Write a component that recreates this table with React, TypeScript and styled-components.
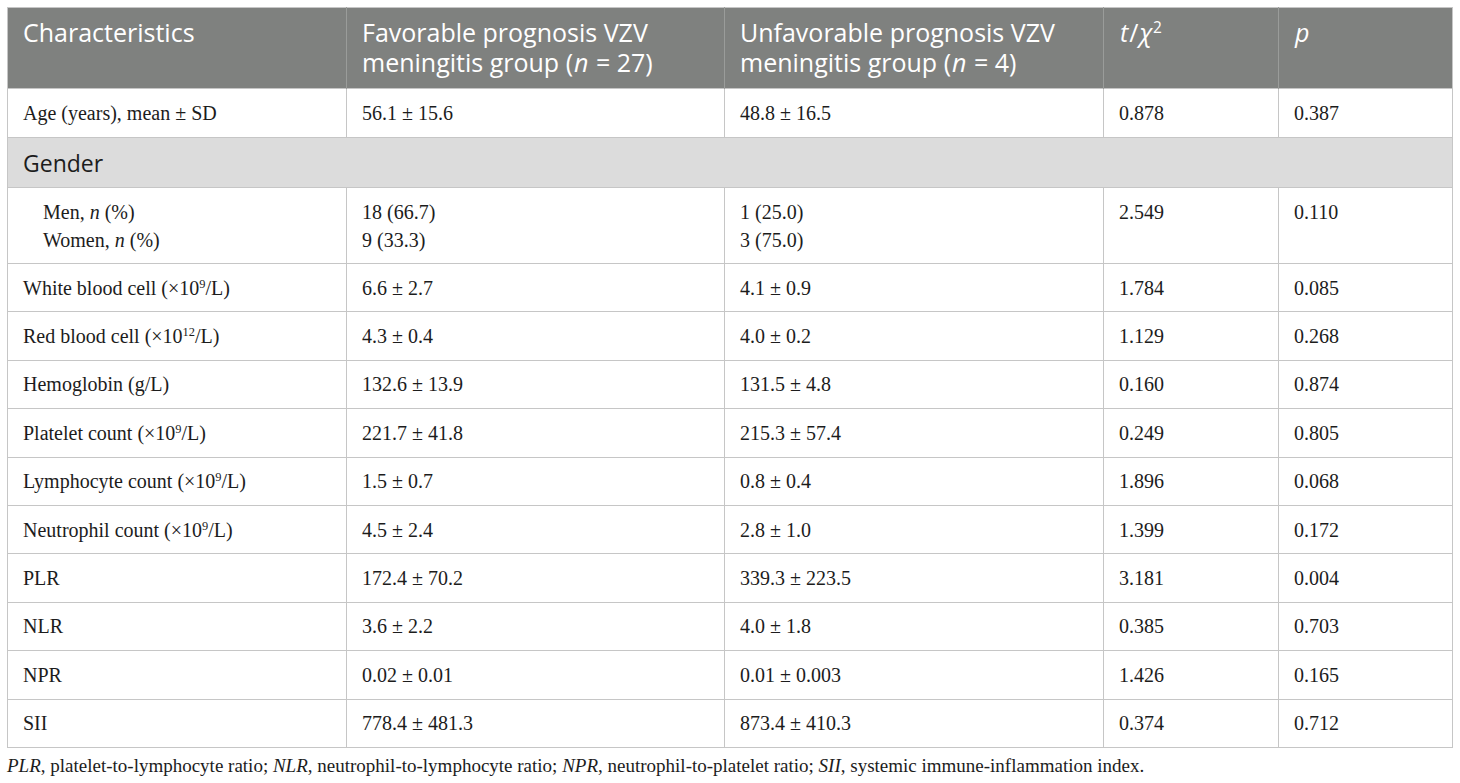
import React from 'react'
import styled, { createGlobalStyle } from 'styled-components'

const GlobalStyle = createGlobalStyle`
  html, body {
    margin: 0;
    padding: 0;
    background: #ffffff;
  }
`;

type Row = {
  label: React.ReactNode,
  fav: React.ReactNode,
  unfav: React.ReactNode,
  stat: string,
  p: string,
}

const colWidths = [339, 378, 379, 175, 174];

const rows: Row[] = [
  { label: <>White blood cell (×10<sup>9</sup>/L)</>, fav: '6.6 ± 2.7', unfav: '4.1 ± 0.9', stat: '1.784', p: '0.085' },
  { label: <>Red blood cell (×10<sup>12</sup>/L)</>, fav: '4.3 ± 0.4', unfav: '4.0 ± 0.2', stat: '1.129', p: '0.268' },
  { label: 'Hemoglobin (g/L)', fav: '132.6 ± 13.9', unfav: '131.5 ± 4.8', stat: '0.160', p: '0.874' },
  { label: <>Platelet count (×10<sup>9</sup>/L)</>, fav: '221.7 ± 41.8', unfav: '215.3 ± 57.4', stat: '0.249', p: '0.805' },
  { label: <>Lymphocyte count (×10<sup>9</sup>/L)</>, fav: '1.5 ± 0.7', unfav: '0.8 ± 0.4', stat: '1.896', p: '0.068' },
  { label: <>Neutrophil count (×10<sup>9</sup>/L)</>, fav: '4.5 ± 2.4', unfav: '2.8 ± 1.0', stat: '1.399', p: '0.172' },
  { label: 'PLR', fav: '172.4 ± 70.2', unfav: '339.3 ± 223.5', stat: '3.181', p: '0.004' },
  { label: 'NLR', fav: '3.6 ± 2.2', unfav: '4.0 ± 1.8', stat: '0.385', p: '0.703' },
  { label: 'NPR', fav: '0.02 ± 0.01', unfav: '0.01 ± 0.003', stat: '1.426', p: '0.165' },
  { label: 'SII', fav: '778.4 ± 481.3', unfav: '873.4 ± 410.3', stat: '0.374', p: '0.712' },
]

export default function App() {
  return (
    <Page>
      <GlobalStyle />
      <Table>
        <colgroup>
          {colWidths.map((w, i) => <Col key={i} $width={w} />)}
        </colgroup>
        <thead>
          <tr>
            <HeadCell>Characteristics</HeadCell>
            <HeadCell>Favorable prognosis VZV meningitis group (<i>n</i> = 27)</HeadCell>
            <HeadCell>Unfavorable prognosis VZV meningitis group (<i>n</i> = 4)</HeadCell>
            <HeadCell><i>t</i>/<i>χ</i><sup>2</sup></HeadCell>
            <HeadCell><i>p</i></HeadCell>
          </tr>
        </thead>
        <tbody>
          <BodyRow $height={49}>
            <Cell>Age (years), mean ± SD</Cell>
            <Cell>56.1 ± 15.6</Cell>
            <Cell>48.8 ± 16.5</Cell>
            <Cell>0.878</Cell>
            <Cell>0.387</Cell>
          </BodyRow>
          <BodyRow $height={50}>
            <GroupCell colSpan={5}>Gender</GroupCell>
          </BodyRow>
          <BodyRow $height={76}>
            <Cell $indent>
              <Line>Men, <i>n</i> (%)</Line>
              <Line>Women, <i>n</i> (%)</Line>
            </Cell>
            <Cell>
              <Line>18 (66.7)</Line>
              <Line>9 (33.3)</Line>
            </Cell>
            <Cell>
              <Line>1 (25.0)</Line>
              <Line>3 (75.0)</Line>
            </Cell>
            <Cell $top>2.549</Cell>
            <Cell $top>0.110</Cell>
          </BodyRow>
          {rows.map((r, i) => (
            <BodyRow key={i} $height={48.4}>
              <Cell>{r.label}</Cell>
              <Cell>{r.fav}</Cell>
              <Cell>{r.unfav}</Cell>
              <Cell>{r.stat}</Cell>
              <Cell>{r.p}</Cell>
            </BodyRow>
          ))}
        </tbody>
      </Table>
      <Footnote>
        <i>PLR</i>, platelet-to-lymphocyte ratio; <i>NLR</i>, neutrophil-to-lymphocyte ratio; <i>NPR</i>, neutrophil-to-platelet ratio; <i>SII</i>, systemic immune-inflammation index.
      </Footnote>
    </Page>
  )
}

const Page = styled.div`
  padding: 7px 0 0 7px;
`;

const Table = styled.table`
  width: 1445px;
  border-collapse: collapse;
  table-layout: fixed;
  border: 1px solid #c6c6c6;

  sup {
    font-size: 0.62em;
    line-height: 0;
    vertical-align: 0.55em;
  }
`;

const Col = styled.col<{ $width: number }>`
  width: ${p => p.$width}px;
`;

const HeadCell = styled.th`
  background: #7f817f;
  color: #ffffff;
  height: 81px;
  padding: 9px 12px 0 15px;
  vertical-align: top;
  text-align: left;
  font-family: "Open Sans", "Liberation Sans", sans-serif;
  font-weight: 400;
  font-size: 25px;
  line-height: 30px;
  border-left: 1px solid #9a9c9a;
  box-sizing: border-box;

  &:first-child {
    border-left: none;
  }

  i {
    padding: 0 1px;
  }
`;

const BodyRow = styled.tr<{ $height: number }>`
  height: ${p => p.$height}px;
`;

const Cell = styled.td<{ $indent?: boolean, $top?: boolean }>`
  padding: ${p => (p.$top ? '12px' : '0')} 15px 0 ${p => (p.$indent ? '35px' : '15px')};
  vertical-align: ${p => (p.$top ? 'top' : 'middle')};
  border: 1px solid #c6c6c6;
  font-family: "Liberation Serif", "DejaVu Serif", serif;
  font-size: 20px;
  line-height: 24px;
  color: #1c1c1c;
`;

const Line = styled.div`
  line-height: 28px;
`;

const GroupCell = styled.td`
  background: #dcdcdc;
  padding: 0 15px;
  border: 1px solid #c6c6c6;
  font-family: "Open Sans", "Liberation Sans", sans-serif;
  font-size: 23px;
  color: #1c1c1c;
`;

const Footnote = styled.p`
  margin: 7px 0 0 0;
  font-family: "Liberation Serif", "DejaVu Serif", serif;
  font-size: 19px;
  color: #1c1c1c;
`;
